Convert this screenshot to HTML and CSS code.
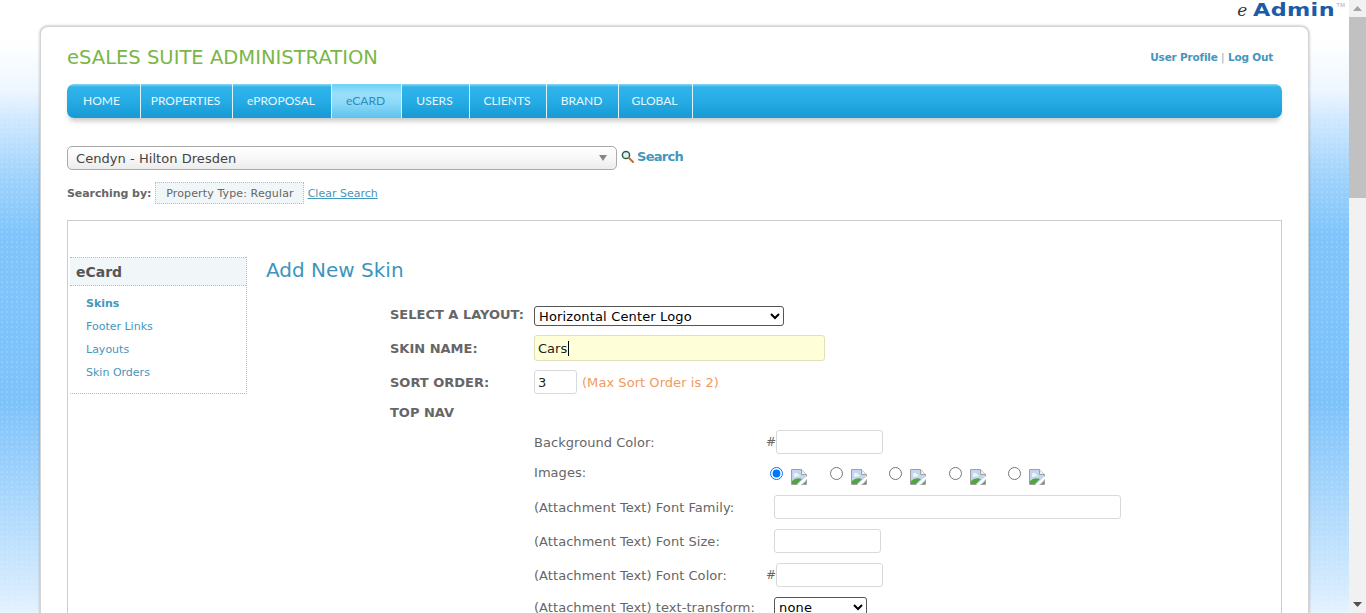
FILE: index.html
```html
<!DOCTYPE html>
<html lang="en">
<head>
<meta charset="utf-8">
<title>eSales Suite Administration</title>
<link rel="stylesheet" href="styles.css">
</head>
<body>
<div class="viewport">
<div class="page">
  <div class="dots"></div>
  <div class="logo-row">
    <span class="logo"><span class="logo-e">e</span><span class="logo-admin">Admin</span><span class="logo-tm">TM</span></span>
  </div>
  <div class="card">
    <header class="head">
      <h1 class="title">eSALES SUITE ADMINISTRATION</h1>
      <div class="user-links"><a href="#">User Profile</a> <span class="pipe">|</span> <a href="#">Log Out</a></div>
    </header>
    <nav class="nav">
      <a href="#">HOME</a>
      <a href="#">PROPERTIES</a>
      <a href="#">ePROPOSAL</a>
      <a href="#" class="active">eCARD</a>
      <a href="#">USERS</a>
      <a href="#">CLIENTS</a>
      <a href="#">BRAND</a>
      <a href="#">GLOBAL</a>
    </nav>
    <div class="search-row">
      <div class="combo"><span>Cendyn - Hilton Dresden</span><i class="combo-arrow"></i></div>
      <svg class="search-icon" width="13" height="13" viewBox="0 0 13 13"><circle cx="5" cy="5" r="3.6" fill="#dff0ee" stroke="#2f5a50" stroke-width="1.5"/><path d="M8 8l4 4" stroke="#b8703a" stroke-width="2" stroke-linecap="round"/></svg>
      <a href="#" class="search-link">Search</a>
    </div>
    <div class="filter-row">
      <b class="filter-label">Searching by:</b>
      <span class="chip">Property Type: Regular</span>
      <a href="#" class="clear">Clear Search</a>
    </div>
    <div class="box">
      <aside class="side">
        <h3 class="side-head">eCard</h3>
        <ul class="side-list">
          <li><a href="#" class="current">Skins</a></li>
          <li><a href="#">Footer Links</a></li>
          <li><a href="#">Layouts</a></li>
          <li><a href="#">Skin Orders</a></li>
        </ul>
      </aside>
      <main class="main">
        <h2 class="page-title">Add New Skin</h2>
        <form class="form">
          <div class="row row-layout">
            <label class="lbl">SELECT A LAYOUT:</label>
            <select class="sel sel-layout"><option>Horizontal Center Logo</option></select>
          </div>
          <div class="row row-name">
            <label class="lbl">SKIN NAME:</label>
            <span class="caret-wrap"><input class="inp inp-name" type="text" value="Cars"><i class="caret"></i></span>
          </div>
          <div class="row row-sort">
            <label class="lbl">SORT ORDER:</label>
            <input class="inp inp-sort" type="text" value="3">
            <span class="warn">(Max Sort Order is 2)</span>
          </div>
          <div class="row row-top">
            <label class="lbl">TOP NAV</label>
          </div>
          <div class="sub sub-bg">
            <label class="sub-lbl">Background Color:</label>
            <span class="hash">#</span><input class="inp inp-color" type="text">
          </div>
          <div class="sub sub-img">
            <label class="sub-lbl">Images:</label>
            <div class="imgs">
              <span class="img-opt"><input type="radio" name="im" checked><svg class="broken" width="16" height="16" viewBox="0 0 16 16"><use href="#broken"/></svg></span>
              <span class="img-opt"><input type="radio" name="im"><svg class="broken" width="16" height="16" viewBox="0 0 16 16"><use href="#broken"/></svg></span>
              <span class="img-opt"><input type="radio" name="im"><svg class="broken" width="16" height="16" viewBox="0 0 16 16"><use href="#broken"/></svg></span>
              <span class="img-opt"><input type="radio" name="im"><svg class="broken" width="16" height="16" viewBox="0 0 16 16"><use href="#broken"/></svg></span>
              <span class="img-opt"><input type="radio" name="im"><svg class="broken" width="16" height="16" viewBox="0 0 16 16"><use href="#broken"/></svg></span>
            </div>
          </div>
          <div class="sub sub-field">
            <label class="sub-lbl">(Attachment Text) Font Family:</label>
            <input class="inp inp-family" type="text">
          </div>
          <div class="sub sub-field">
            <label class="sub-lbl">(Attachment Text) Font Size:</label>
            <input class="inp inp-size" type="text">
          </div>
          <div class="sub sub-field">
            <label class="sub-lbl">(Attachment Text) Font Color:</label>
            <span class="hash">#</span><input class="inp inp-color" type="text">
          </div>
          <div class="sub sub-last">
            <label class="sub-lbl">(Attachment Text) text-transform:</label>
            <select class="sel sel-transform"><option>none</option></select>
          </div>
        </form>
      </main>
    </div>
  </div>
</div>
<div class="scrollbar">
  <span class="sb-btn"><svg width="9" height="5" viewBox="0 0 9 5"><path d="M4.5 0L9 5H0z" fill="#a3a3a3"/></svg></span>
  <span class="sb-thumb"></span>
  <span class="sb-track"></span>
  <span class="sb-btn"><svg width="9" height="5" viewBox="0 0 9 5"><path d="M4.5 5L9 0H0z" fill="#505050"/></svg></span>
</div>
</div>
<svg class="defs" width="0" height="0">
  <symbol id="broken" viewBox="0 0 16 16">
    <path d="M.5.5h10l5 5v10H.5z" fill="#fff" stroke="#a0a0a0"/>
    <path d="M1 1h9v5h5v9H1z" fill="#c4d6ef"/>
    <path d="M3 6a2 2 0 0 1 3-2l3 3-6 1z" fill="#eef3fa"/>
    <path d="M1 15v-3q4-4 10-2l-5 5z" fill="#4fa63f"/>
    <path d="M10.500 .5v5h5" fill="#efefef" stroke="#a0a0a0"/>
    <path d="M6 16l10-9v3l-6 6z" fill="#fff"/>
    <path d="M12 15l3-3v3z" fill="#6a9a5a"/>
  </symbol>
</svg>
</body>
</html>
```
FILE: styles.css
```css
* { box-sizing: border-box; }
html, body { margin: 0; height: 100%; overflow: hidden; }
body { font-family: "DejaVu Sans", Verdana, sans-serif; color: #666; font-size: 13px; }
a { color: #4596bb; text-decoration: none; }
.defs { position: absolute; }

.viewport { display: flex; height: 100vh; }
.page {
  position: relative;
  flex: 1;
  min-width: 0;
  overflow: hidden;
  background: linear-gradient(180deg, #fff 0, #fff 40px, #eef7ff 90px, #cfe8ff 120px, #a0d3fc 176px, #7fc5fb 234px, #7dc2fb 400px, #a5d5fc 490px, #d6ebfe 590px, #e6f3fe 613px);
}
.scrollbar { flex: none; width: 17px; display: flex; flex-direction: column; background: #f1f1f1; }
.sb-btn { height: 17px; flex: none; display: flex; align-items: center; justify-content: center; }
.sb-thumb { height: 181px; flex: none; background: #c1c1c1; }
.sb-track { flex: 1; }

.dots {
  position: absolute; left: 0; top: 100px; width: 100%; height: 513px;
  background-image: radial-gradient(circle at 2px 2px, rgba(255,255,255,.13) 1px, transparent 1.4px);
  background-size: 5px 5px;
  pointer-events: none;
}

.logo-row { position: relative; height: 26px; display: flex; justify-content: flex-end; padding-right: 4px; }
.logo { display: flex; align-items: flex-start; height: 20px; white-space: nowrap; line-height: 20px; }
.logo-e { font-family: "DejaVu Serif", serif; font-style: italic; font-size: 17px; line-height: 20px; color: #333; margin-right: 6px; }
.logo-admin { display: inline-block; width: 83px; font-family: "DejaVu Sans", sans-serif; font-weight: 700; font-size: 18px; letter-spacing: .3px; color: #1c5ca6; line-height: 19px; transform: scaleX(1.24); transform-origin: left center; }
.logo-tm { font-family: "Liberation Sans", sans-serif; font-size: 6px; line-height: 10px; color: #aaa; }

.card {
  position: relative;
  margin: 0 40px;
  padding: 15px 26px 40px 26px;
  background: #fff;
  border: 1px solid #d4d4d4;
  border-radius: 8px;
  box-shadow: 0 0 3px rgba(110,110,110,.55);
}

.head { display: flex; justify-content: space-between; align-items: center; height: 30px; }
.title { margin: 0; font-weight: 400; font-size: 19.55px; color: #7ab648; white-space: nowrap; }
.user-links { font-size: 10.5px; letter-spacing: -.2px; font-weight: 700; margin-right: 9px; white-space: nowrap; }
.pipe { color: #8bb3c3; font-weight: 400; }

.nav {
  margin-top: 12px; height: 34px;
  display: grid;
  grid-template-columns: 74px 92px 99px 70px 68px 77px 72px 74px;
  border-radius: 7px;
  background: linear-gradient(180deg, #8ed4f2 0, #2fb3ea 3px, #27ade6 16px, #189ad5 33px);
  box-shadow: 0 5px 5px -2px rgba(130,130,130,.45);
}
.nav a {
  display: flex; align-items: center; justify-content: center;
  padding: 0 2px 2px 0;
  font-family: Lato, sans-serif; font-size: 12px; color: #e8f7fd;
  border-right: 1px solid #dff3fb;
}
.nav a:first-child { padding-right: 4px; }
.nav a.active { color: #2b8dbd; background: linear-gradient(180deg, #6fd0f5 0, #9be0fb 10px, #8bd8f8 20px, #5cc2ec 34px); }

.search-row { margin-top: 28px; display: flex; align-items: flex-start; height: 24px; }
.combo {
  width: 550px; height: 24px; padding: 0 8px;
  display: flex; align-items: center; justify-content: space-between;
  border: 1px solid #aaa; border-radius: 5px;
  background: linear-gradient(180deg, #fff 0, #f8f8f8 50%, #ececec 100%);
  color: #444; font-size: 13px; letter-spacing: .05px;
}
.combo-arrow { width: 0; height: 0; margin-right: 1px; border: 4px solid transparent; border-top: 6px solid #888; border-bottom: 0; }
.search-icon { margin: 4px 3px 0 4px; }
.search-link { font-size: 13px; letter-spacing: -.7px; font-weight: 700; line-height: 21px; }

.filter-row { margin-top: 12px; height: 22px; display: flex; align-items: center; font-size: 11px; }
.filter-label { color: #666; letter-spacing: -.08px; }
.chip { margin-left: 4px; padding: 0 9px 0 10px; height: 22px; line-height: 21px; font-size: 11px; letter-spacing: .12px; background: #f1f6f8; border: 1px dotted #bbb; }
.clear { margin-left: 4px; font-size: 11px; text-decoration: underline; }

.box { margin-top: 16px; padding: 36px 2px 0; display: flex; align-items: flex-start; border: 1px solid #ccc; }
.side { width: 177px; height: 137px; border-right: 1px dotted #bbb; border-bottom: 1px dotted #bbb; }
.side-head { margin: 0; height: 29px; padding-left: 6px; font-size: 14px; line-height: 28px; color: #555; background: #f1f6f8; border-top: 1px dotted #bbb; border-bottom: 1px dotted #bbb; }
.side-list { margin: 6px 0 0; padding: 0 0 0 16px; list-style: none; font-size: 11px; }
.side-list li { height: 23px; line-height: 23px; }
.side-list .current { font-weight: 700; }

.main { margin-left: 19px; flex: 1; }
.page-title { margin: 0; height: 27px; font-weight: 400; font-size: 20px; line-height: 26px; color: #3d95bd; }
.form { margin: 22px 0 0 124px; }
.row { display: flex; align-items: center; }
.lbl { width: 144px; font-size: 13px; font-weight: 700; color: #666; white-space: nowrap; }
.row-layout { height: 20px; }
.row-layout .lbl { margin-top: -4px; }
.row-name { height: 26px; margin-top: 9px; }
.row-sort { height: 24px; margin-top: 9px; }
.row-top { height: 20px; margin-top: 8px; }

.sel { font-family: "DejaVu Sans", Verdana, sans-serif; font-size: 13px; letter-spacing: .15px; color: #000; background: #fff; border: 1px solid #555; border-radius: 3px; padding: 0; }
.sel-layout { width: 250px; height: 20px; }
.sel-transform { width: 93px; height: 20px; margin-left: 7px; }
.inp { font-family: "DejaVu Sans", Verdana, sans-serif; font-size: 13px; color: #222; height: 24px; padding: 0 3px; background: #fff; border: 1px solid #d9d9d9; border-radius: 3px; outline: none; }
.caret-wrap { position: relative; display: block; height: 26px; }
.caret { position: absolute; left: 34px; top: 6px; width: 1px; height: 15px; background: #000; }
.inp-name { display: block; width: 291px; height: 26px; background: #fefed9; border-color: #e2e0b6; }
.inp-sort { width: 43px; }
.warn { margin-left: 5px; color: #f29a5e; font-size: 13px; letter-spacing: .05px; }

.sub { display: flex; align-items: center; margin-left: 144px; }
.sub-lbl { width: 233px; flex: none; font-size: 13px; letter-spacing: .05px; color: #666; white-space: nowrap; }
.hash { width: 10px; margin-left: -1px; flex: none; color: #666; font-size: 12px; }
.sub-bg { height: 24px; margin-top: 8px; }
.sub-img { height: 19px; margin-top: 12px; align-items: flex-start; }
.sub-img .sub-lbl { margin-top: -1px; }
.sub-field { height: 24px; margin-top: 10px; }
.sub-last { height: 20px; margin-top: 10px; }
.inp-color { width: 107px; }
.inp-family { width: 347px; margin-left: 7px; }
.inp-size { width: 107px; margin-left: 7px; }
.imgs { margin-left: 3px; display: flex; }
.img-opt { width: 59.5px; flex: none; display: flex; align-items: flex-start; }
.img-opt input { margin: 1px 8px 0 0; width: 13px; height: 13px; }
.broken { margin-top: 3px; }
```
